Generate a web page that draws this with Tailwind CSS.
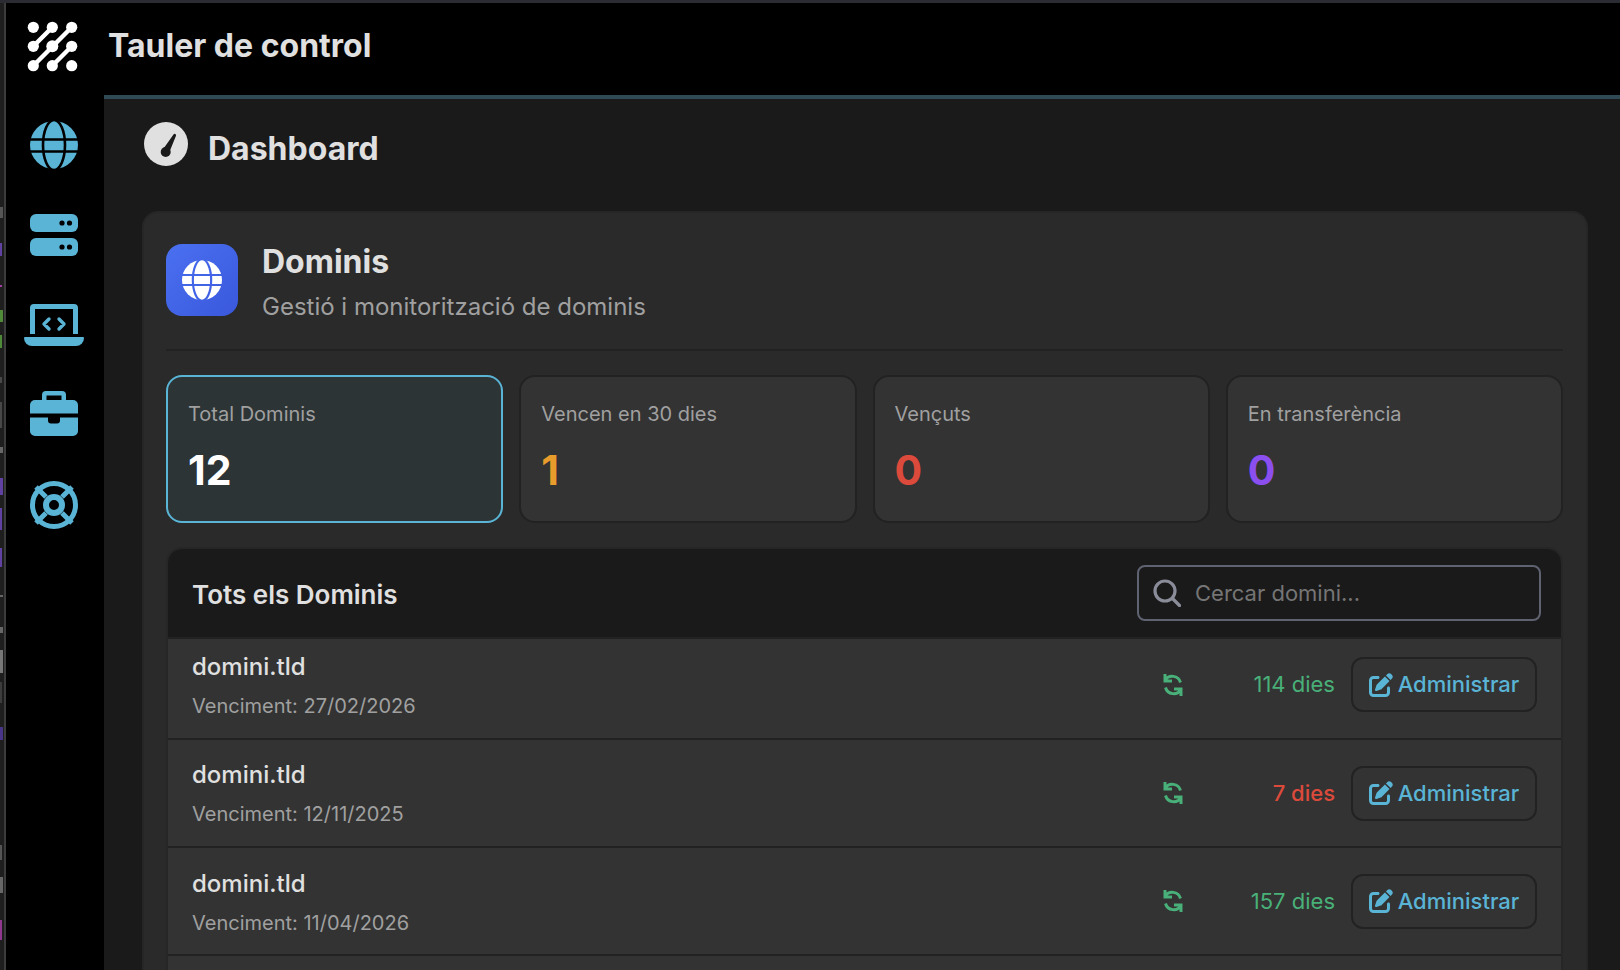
<!DOCTYPE html>
<html lang="ca">
<head>
  <meta charset="UTF-8" />
  <meta name="viewport" content="width=device-width, initial-scale=1.0" />
  <title>Tauler de control</title>
  <script src="https://cdn.jsdelivr.net/npm/@tailwindcss/browser@4"></script>
</head>
<body class="h-screen overflow-hidden bg-black font-[Inter,sans-serif] text-[#e0e0e0]">
  <div class="h-[3px] bg-[#2b2b33]"></div>
  <div class="flex h-[967px]">
    <!-- editor behind the window -->
    <div class="w-[4px] shrink-0 overflow-hidden bg-[#1e1e1e]">
      <div class="mt-[204px] h-[11px] w-[3px] bg-[#555]"></div>
      <div class="mt-[25px] h-[13px] w-[2px] bg-[#6040a0]"></div>
      <div class="mt-[29px] h-[2px] w-[2px] bg-[#a040a0]"></div>
      <div class="mt-[23px] h-[12px] w-[3px] bg-[#4f8a38]"></div>
      <div class="mt-[13px] h-[13px] w-[2px] bg-[#4f8a38]"></div>
      <div class="mt-[29px] h-[6px] w-[2px] bg-[#484848]"></div>
      <div class="mt-[19px] h-[26px] w-[2px] bg-[#484848]"></div>
      <div class="mt-[19px] h-[6px] w-[3px] bg-[#666]"></div>
      <div class="mt-[25px] h-[17px] w-[3px] bg-[#6040a0]"></div>
      <div class="mt-[13px] h-[22px] w-[2px] bg-[#6040a0]"></div>
      <div class="mt-[18px] h-[19px] w-[2px] bg-[#6040a0]"></div>
      <div class="mt-[28px] h-[2px] w-[3px] bg-[#666]"></div>
      <div class="mt-[30px] h-[6px] w-[3px] bg-[#666]"></div>
      <div class="mt-[17px] h-[23px] w-[3px] bg-[#777]"></div>
      <div class="mt-[9px] h-[21px] w-[2px] bg-[#3c3c3c]"></div>
      <div class="mt-[24px] h-[13px] w-[3px] bg-[#483488]"></div>
      <div class="mt-[105px] h-[15px] w-[2px] bg-[#555]"></div>
      <div class="mt-[17px] h-[16px] w-[3px] bg-[#666]"></div>
      <div class="mt-[27px] h-[20px] w-[2px] bg-[#903890]"></div>
    </div>
    <div class="w-[2px] shrink-0 bg-[#3c3c3c]"></div>

    <div class="flex min-w-0 flex-1 flex-col">
      <!-- Header -->
      <header class="flex h-[92px] shrink-0 items-center bg-black">
        <svg class="mb-[4px] ml-[14px] h-[66px] w-[66px] shrink-0" viewBox="0 0 66 66" fill="#fff" stroke="#fff" stroke-width="4.4" stroke-linecap="round">
          <line x1="32.3" y1="13.3" x2="13.3" y2="32.3" />
          <line x1="51.7" y1="13.3" x2="13.3" y2="51.7" />
          <line x1="51.7" y1="32.3" x2="32.3" y2="51.7" />
          <g stroke="none">
            <circle cx="13.3" cy="13.3" r="5.6" /><circle cx="32.3" cy="13.3" r="5.6" /><circle cx="51.7" cy="13.3" r="5.6" />
            <circle cx="13.3" cy="32.3" r="5.6" /><circle cx="32.3" cy="32.3" r="6" /><circle cx="51.7" cy="32.3" r="5.6" />
            <circle cx="13.3" cy="51.7" r="5.6" /><circle cx="32.3" cy="51.7" r="5.6" /><circle cx="51.7" cy="51.7" r="5.6" />
          </g>
        </svg>
        <h1 class="mb-[6px] ml-[22px] text-[32px] font-[650]">Tauler de control</h1>
      </header>

      <div class="flex min-h-0 flex-1">
        <!-- Sidebar -->
        <aside class="flex w-[98px] shrink-0 flex-col items-center bg-black pt-[26px] pr-[2px] text-[#5ab4d6]">
          <svg class="h-[48px] w-[48px]" viewBox="0 0 48 48">
            <mask id="g1"><rect width="48" height="48" fill="#fff" /><g fill="none" stroke="#000" stroke-width="2.6"><ellipse cx="24" cy="24" rx="11" ry="25" /><line x1="0" y1="18.5" x2="48" y2="18.5" /><line x1="0" y1="30.5" x2="48" y2="30.5" /></g></mask>
            <circle cx="24" cy="24" r="24" fill="currentColor" mask="url(#g1)" />
          </svg>
          <svg class="mt-[45px] h-[42px] w-[48px]" viewBox="0 0 48 42">
            <rect width="48" height="18" rx="6" fill="currentColor" />
            <rect y="24" width="48" height="18" rx="6" fill="currentColor" />
            <g fill="#000"><circle cx="32" cy="9" r="2.6" /><circle cx="39.5" cy="9" r="2.6" /><circle cx="32" cy="33" r="2.6" /><circle cx="39.5" cy="33" r="2.6" /></g>
          </svg>
          <svg class="mt-[48px] h-[42px] w-[60px]" viewBox="0 0 60 42" fill="currentColor">
            <path fill-rule="evenodd" d="M10 0H50a4 4 0 0 1 4 4V30H49V5H11V30H6V4a4 4 0 0 1 4-4z" />
            <path d="M1 33H59a1 1 0 0 1 1 1a8 8 0 0 1-8 8H8a8 8 0 0 1-8-8a1 1 0 0 1 1-1z" />
            <path d="M25 15L20 20L25 25M35 15L40 20L35 25" fill="none" stroke="currentColor" stroke-width="3.4" stroke-linecap="round" stroke-linejoin="round" />
          </svg>
          <svg class="mt-[45px] h-[45px] w-[48px]" viewBox="0 0 48 45" fill="currentColor">
            <path d="M12 9V4a4 4 0 0 1 4-4H32a4 4 0 0 1 4 4V9H31.5V4.5H16.5V9z" />
            <path d="M5 9H43a5 5 0 0 1 5 5V22.5H0V14a5 5 0 0 1 5-5z" />
            <path d="M0 26.5H18V29.5a3 3 0 0 0 3 3H27a3 3 0 0 0 3-3V26.5H48V40a5 5 0 0 1-5 5H5a5 5 0 0 1-5-5z" />
          </svg>
          <svg class="mt-[45px] h-[48px] w-[48px]" viewBox="0 0 48 48" fill="none" stroke="currentColor">
            <circle cx="24" cy="24" r="21.5" stroke-width="5" />
            <circle cx="24" cy="24" r="8" stroke-width="6" />
            <path d="M6 6L16 16M42 6L32 16M6 42L16 32M42 42L32 32" stroke-width="5" />
          </svg>
        </aside>

        <!-- Main -->
        <main class="min-w-0 flex-1 overflow-hidden border-t-4 border-[#2f4a55] bg-[#1a1a1a] pr-[32px] pl-[38px]">
          <div class="flex h-[112px] items-start pt-[23px] pl-[2px]">
            <svg class="h-[44px] w-[44px] shrink-0" viewBox="0 0 44 44">
              <mask id="g2"><rect width="44" height="44" fill="#fff" /><circle cx="21.7" cy="30" r="5" fill="#000" /><path d="M18.5 28L29.5 12.5a1.4 1.4 0 0 1 2.5 1.2L25 31z" fill="#000" /></mask>
              <circle cx="22" cy="22" r="22" fill="#e0e0e0" mask="url(#g2)" />
            </svg>
            <h2 class="mt-[5px] ml-[20px] text-[32px] leading-[44px] font-[650]">Dashboard</h2>
          </div>

          <section class="rounded-2xl border-2 border-[#262626] bg-[#2a2a2a] pt-[31px] pr-[23px] pl-[22px]">
            <div class="flex h-[107px] items-start gap-6 border-b-2 border-[#222]">
              <div class="flex h-[72px] w-[72px] items-center justify-center rounded-2xl bg-gradient-to-br from-[#4a70f0] to-[#3a58dc]">
                <svg class="h-[40px] w-[40px]" viewBox="0 0 48 48">
                  <mask id="g3"><rect width="48" height="48" fill="#fff" /><g fill="none" stroke="#000" stroke-width="2.6"><ellipse cx="24" cy="24" rx="11" ry="25" /><line x1="0" y1="18" x2="48" y2="18" /><line x1="0" y1="30" x2="48" y2="30" /></g></mask>
                  <circle cx="24" cy="24" r="24" fill="#fff" mask="url(#g3)" />
                </svg>
              </div>
              <div>
                <h3 class="text-[32px] leading-[36px] font-[650]">Dominis</h3>
                <p class="mt-[9px] text-[24px] leading-[36px] text-[#a0a0a0]">Gestió i monitorització de dominis</p>
              </div>
            </div>

            <div class="mt-[24px] grid grid-cols-4 gap-4">
              <div class="h-[148px] rounded-2xl border-2 border-[#5ab4d6] bg-[#2d3436] px-[20px] pt-[22px]">
                <p class="text-[20px] leading-[30px] text-[#a0a0a0]">Total Dominis</p>
                <p class="mt-[16px] text-[41px] leading-[50px] font-bold text-white">12</p>
              </div>
              <div class="h-[148px] rounded-2xl border-2 border-[#222] bg-[#333] px-[20px] pt-[22px]">
                <p class="text-[20px] leading-[30px] text-[#a0a0a0]">Vencen en 30 dies</p>
                <p class="mt-[16px] text-[41px] leading-[50px] font-bold text-[#e89c2c]">1</p>
              </div>
              <div class="h-[148px] rounded-2xl border-2 border-[#222] bg-[#333] px-[20px] pt-[22px]">
                <p class="text-[20px] leading-[30px] text-[#a0a0a0]">Vençuts</p>
                <p class="mt-[16px] text-[41px] leading-[50px] font-bold text-[#dc4a3c]">0</p>
              </div>
              <div class="h-[148px] rounded-2xl border-2 border-[#222] bg-[#333] px-[20px] pt-[22px]">
                <p class="text-[20px] leading-[30px] text-[#a0a0a0]">En transferència</p>
                <p class="mt-[16px] text-[41px] leading-[50px] font-bold text-[#8b4ff0]">0</p>
              </div>
            </div>

            <!-- Taula -->
            <div class="mt-[24px] overflow-hidden rounded-2xl border-2 border-b-0 border-[#262626] bg-[#333]">
              <div class="flex h-[90px] items-center justify-between border-b-2 border-[#222] bg-[#1a1a1a] pr-[20px] pl-[24px]">
                <h4 class="mt-[2px] text-[26px] font-semibold">Tots els Dominis</h4>
                <div class="flex h-[56px] w-[404px] items-center rounded-lg border-2 border-[#5f6270] pl-[14px]">
                  <svg class="h-[28px] w-[28px] shrink-0" viewBox="0 0 28 28" fill="none" stroke="#8a8d99" stroke-width="3.2" stroke-linecap="round"><circle cx="12" cy="12" r="10" /><line x1="19.5" y1="19.5" x2="26.5" y2="26.5" /></svg>
                  <span class="ml-[14px] text-[22px] text-[#757575]">Cercar domini...</span>
                </div>
              </div>

              <div class="flex h-[101px] items-center border-b-2 border-[#222] pr-[24px] pb-[8px] pl-[24px]">
                <div class="mt-[3px] flex-1">
                  <p class="text-[24px] leading-[36px] font-medium">domini.tld</p>
                  <p class="mt-[3px] text-[20px] leading-[36px] text-[#a0a0a0]">Venciment: 27/02/2026</p>
                </div>
                <svg class="mr-[48px] h-[24px] w-[20px]" viewBox="0 0 20 24" fill="none" stroke="#48b078" stroke-width="3"><path d="M2 1V8H9M2 7.5A8.5 8.5 0 0 1 17.5 9.5M18 23V16H11M18 16.5A8.5 8.5 0 0 1 2.5 14.5" /></svg>
                <span class="w-[104px] text-right text-[22px] text-[#48b078]">114 dies</span>
                <a class="ml-[16px] flex h-[55px] w-[186px] items-center justify-center gap-[5px] rounded-xl border-2 border-[#222] text-[22px] font-medium text-[#5ab4d6]">
                  <svg class="h-[24px] w-[24px]" viewBox="0 0 512 512" fill="currentColor"><path d="M471.6 21.7c-21.9-21.9-57.3-21.9-79.2 0L362.3 51.7l97.9 97.9 30.1-30.1c21.9-21.9 21.9-57.3 0-79.2L471.6 21.7zm-299.2 220c-6.1 6.1-10.8 13.6-13.5 21.9l-29.6 88.8c-2.9 8.6-.6 18.1 5.8 24.6s15.9 8.7 24.6 5.8l88.8-29.6c8.2-2.7 15.7-7.4 21.9-13.5L437.7 172.3 339.7 74.3 172.4 241.7zM96 64C43 64 0 107 0 160V416c0 53 43 96 96 96H352c53 0 96-43 96-96V320c0-17.7-14.3-32-32-32s-32 14.3-32 32v96c0 17.7-14.3 32-32 32H96c-17.7 0-32-14.3-32-32V160c0-17.7 14.3-32 32-32h96c17.7 0 32-14.3 32-32s-14.3-32-32-32H96z" /></svg>
                  Administrar
                </a>
              </div>

              <div class="flex h-[108px] items-center border-b-2 border-[#222] pr-[24px] pl-[24px]">
                <div class="mt-[3px] flex-1">
                  <p class="text-[24px] leading-[36px] font-medium">domini.tld</p>
                  <p class="mt-[3px] text-[20px] leading-[36px] text-[#a0a0a0]">Venciment: 12/11/2025</p>
                </div>
                <svg class="mr-[48px] h-[24px] w-[20px]" viewBox="0 0 20 24" fill="none" stroke="#48b078" stroke-width="3"><path d="M2 1V8H9M2 7.5A8.5 8.5 0 0 1 17.5 9.5M18 23V16H11M18 16.5A8.5 8.5 0 0 1 2.5 14.5" /></svg>
                <span class="w-[104px] text-right text-[22px] font-medium text-[#dc4a3c]">7 dies</span>
                <a class="ml-[16px] flex h-[55px] w-[186px] items-center justify-center gap-[5px] rounded-xl border-2 border-[#222] text-[22px] font-medium text-[#5ab4d6]">
                  <svg class="h-[24px] w-[24px]" viewBox="0 0 512 512" fill="currentColor"><path d="M471.6 21.7c-21.9-21.9-57.3-21.9-79.2 0L362.3 51.7l97.9 97.9 30.1-30.1c21.9-21.9 21.9-57.3 0-79.2L471.6 21.7zm-299.2 220c-6.1 6.1-10.8 13.6-13.5 21.9l-29.6 88.8c-2.9 8.6-.6 18.1 5.8 24.6s15.9 8.7 24.6 5.8l88.8-29.6c8.2-2.7 15.7-7.4 21.9-13.5L437.7 172.3 339.7 74.3 172.4 241.7zM96 64C43 64 0 107 0 160V416c0 53 43 96 96 96H352c53 0 96-43 96-96V320c0-17.7-14.3-32-32-32s-32 14.3-32 32v96c0 17.7-14.3 32-32 32H96c-17.7 0-32-14.3-32-32V160c0-17.7 14.3-32 32-32h96c17.7 0 32-14.3 32-32s-14.3-32-32-32H96z" /></svg>
                  Administrar
                </a>
              </div>

              <div class="flex h-[108px] items-center border-b-2 border-[#222] pr-[24px] pl-[24px]">
                <div class="mt-[5px] flex-1">
                  <p class="text-[24px] leading-[36px] font-medium">domini.tld</p>
                  <p class="mt-[3px] text-[20px] leading-[36px] text-[#a0a0a0]">Venciment: 11/04/2026</p>
                </div>
                <svg class="mr-[48px] h-[24px] w-[20px]" viewBox="0 0 20 24" fill="none" stroke="#48b078" stroke-width="3"><path d="M2 1V8H9M2 7.5A8.5 8.5 0 0 1 17.5 9.5M18 23V16H11M18 16.5A8.5 8.5 0 0 1 2.5 14.5" /></svg>
                <span class="w-[104px] text-right text-[22px] text-[#48b078]">157 dies</span>
                <a class="ml-[16px] flex h-[55px] w-[186px] items-center justify-center gap-[5px] rounded-xl border-2 border-[#222] text-[22px] font-medium text-[#5ab4d6]">
                  <svg class="h-[24px] w-[24px]" viewBox="0 0 512 512" fill="currentColor"><path d="M471.6 21.7c-21.9-21.9-57.3-21.9-79.2 0L362.3 51.7l97.9 97.9 30.1-30.1c21.9-21.9 21.9-57.3 0-79.2L471.6 21.7zm-299.2 220c-6.1 6.1-10.8 13.6-13.5 21.9l-29.6 88.8c-2.9 8.6-.6 18.1 5.8 24.6s15.9 8.7 24.6 5.8l88.8-29.6c8.2-2.7 15.7-7.4 21.9-13.5L437.7 172.3 339.7 74.3 172.4 241.7zM96 64C43 64 0 107 0 160V416c0 53 43 96 96 96H352c53 0 96-43 96-96V320c0-17.7-14.3-32-32-32s-32 14.3-32 32v96c0 17.7-14.3 32-32 32H96c-17.7 0-32-14.3-32-32V160c0-17.7 14.3-32 32-32h96c17.7 0 32-14.3 32-32s-14.3-32-32-32H96z" /></svg>
                  Administrar
                </a>
              </div>

              <div class="h-[60px]"></div>
            </div>
          </section>
        </main>
      </div>
    </div>
  </div>
</body>
</html>
